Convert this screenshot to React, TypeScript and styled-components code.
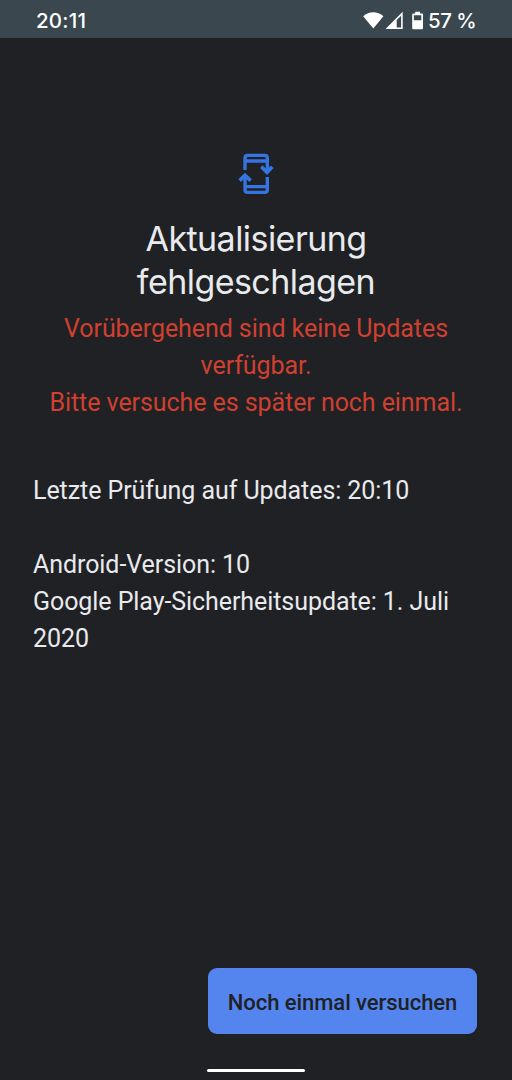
import React from "react";
import styled, { createGlobalStyle } from "styled-components";

const GlobalStyle = createGlobalStyle`
  * { box-sizing: border-box; }
  body { margin: 0; background: #202124; }
`;

const Screen = styled.div`
  width: 512px;
  height: 1080px;
  display: flex;
  flex-direction: column;
  background: #202124;
  color: #e8eaed;
  font-family: Roboto, sans-serif;
`;

const StatusBar = styled.header`
  height: 38px;
  flex: none;
  display: flex;
  align-items: center;
  justify-content: space-between;
  padding: 4px 36px 0;
  background: #3a474e;
  color: #fff;
  font: 500 20.5px/30px Inter, sans-serif;
`;

const Clock = styled.span`
  letter-spacing: 0.2px;
`;

const StatusIcons = styled.div`
  display: flex;
  align-items: center;
`;

const Battery = styled.span`
  width: 48px;
  margin-left: 3px;
  letter-spacing: -0.5px;
  white-space: nowrap;
`;

const Content = styled.main`
  flex: 1;
  display: flex;
  flex-direction: column;
  padding: 114px 33px 0;
`;

const UpdateIcon = styled.svg`
  align-self: center;
  display: block;
`;

const Title = styled.h1`
  margin: 21px 0 0;
  text-align: center;
  font: 400 34px/43px Inter, sans-serif;
  letter-spacing: -0.55px;
`;

const Message = styled.p<{ $error?: boolean; $top: number }>`
  margin: ${(p) => p.$top}px 0 0;
  font-size: 25px;
  line-height: 37px;
  letter-spacing: -0.07px;
  white-space: nowrap;
  color: ${(p) => (p.$error ? "#cf4030" : "inherit")};
  text-align: ${(p) => (p.$error ? "center" : "left")};
`;

const Actions = styled.footer`
  display: flex;
  justify-content: flex-end;
  padding: 0 35px 35px;
`;

const RetryButton = styled.button`
  width: 269px;
  height: 66px;
  padding: 3px 0 0;
  border: 0;
  border-radius: 9px;
  background: #5484ed;
  color: #202124;
  font: 500 22px/30px Roboto, sans-serif;
  letter-spacing: -0.05px;
`;

const HomeHandle = styled.div`
  width: 98px;
  height: 3px;
  margin: 0 0 8px 207px;
  border-radius: 2px;
  background: #fff;
`;

export default function App() {
  return (
    <>
      <GlobalStyle />
      <Screen>
        <StatusBar>
          <Clock>20:11</Clock>
          <StatusIcons>
            <svg width="62" height="20" viewBox="363 10 62 20" fill="#fff">
              <path d="M363.2 15.3C368.8 9.9 377.8 9.9 383.4 15.3L373.3 27.4Z" />
              <path fillRule="evenodd" d="M385.5 28L402.7 10.8V28ZM396.7 19.1V26.5H401.1V14.7Z" />
              <path
                fillRule="evenodd"
                d="M415.2 10.8H420V12.5H422Q423 12.5 423 13.5V27.3Q423 28.3 422 28.3H413.2Q412.2 28.3 412.2 27.3V13.5Q412.2 12.5 413.2 12.5H415.2ZM413.9 14.2V19.2H421.3V14.2Z"
              />
            </svg>
            <Battery>57 %</Battery>
          </StatusIcons>
        </StatusBar>
        <Content>
          <UpdateIcon
            width="40"
            height="44"
            viewBox="30 24 120 132"
            fill="none"
            stroke="#3574e2"
            strokeWidth="10"
          >
            <path d="M57 78V42Q57 34 65 34H116Q124 34 124 42V82" />
            <path d="M124 99V137Q124 145 116 145H65Q57 145 57 137V94" />
            <path d="M57 51H124M57 128H124" />
            <path d="M106 68L123 85L139 68M41 110L57 94L74 110" strokeWidth="11" />
          </UpdateIcon>
          <Title>
            Aktualisierung
            <br />
            fehlgeschlagen
          </Title>
          <Message $error $top={7}>
            Vorübergehend sind keine Updates
            <br />
            verfügbar.
            <br />
            Bitte versuche es später noch einmal.
          </Message>
          <Message $top={51}>Letzte Prüfung auf Updates: 20:10</Message>
          <Message $top={37}>
            Android-Version: 10
            <br />
            Google Play-Sicherheitsupdate: 1. Juli
            <br />
            2020
          </Message>
        </Content>
        <Actions>
          <RetryButton>Noch einmal versuchen</RetryButton>
        </Actions>
        <HomeHandle />
      </Screen>
    </>
  );
}
